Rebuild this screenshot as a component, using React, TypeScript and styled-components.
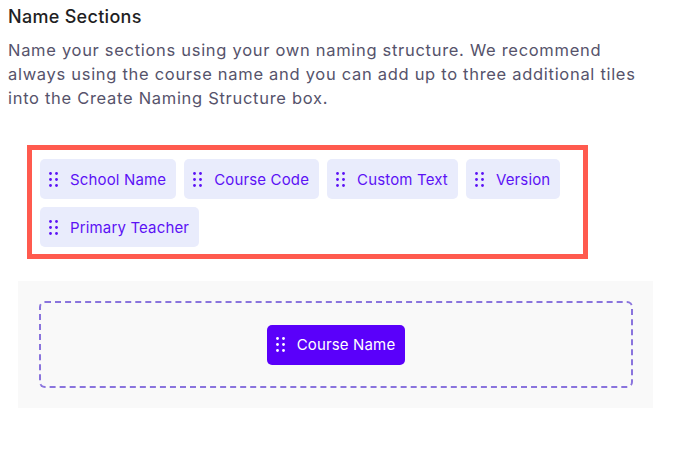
import React from 'react';
import styled, { createGlobalStyle } from 'styled-components';

const GlobalStyle = createGlobalStyle`
	body {
		margin: 0;
		background: #ffffff;
		font-family: Inter, 'Noto Sans', sans-serif;
	}
`;

const PageUI = styled.div`
	padding: 4px 8px 8px;
`;

const TitleUI = styled.h2`
	margin: 0;
	font-size: 18px;
	font-weight: 500;
	letter-spacing: 0.3px;
	line-height: 26px;
	color: #1f1f24;
`;

const DescUI = styled.p`
	margin: 8px 0 0;
	font-size: 16.5px;
	letter-spacing: 0.7px;
	line-height: 24px;
	color: #56536b;
	width: 645px;
`;

const TilesUI = styled.div`
	display: flex;
	flex-wrap: wrap;
	gap: 8px;
	width: 535px;
	margin: 35px 0 0 19px;
	padding: 9px 8px 7px;
	border: 5px solid #ff5a4e;
	box-sizing: content-box;
`;

const TileUI = styled.div<{ $active?: boolean }>`
	display: flex;
	align-items: center;
	gap: 12px;
	height: 40px;
	padding: 0 10px 0 9px;
	box-sizing: border-box;
	border-radius: 5px;
	font-size: 15px;
	letter-spacing: 0.15px;
	background: ${(p) => (p.$active ? '#5a00fa' : '#e9ecfc')};
	color: ${(p) => (p.$active ? '#ffffff' : '#5c12f5')};
`;

const DropAreaUI = styled.div`
	margin: 22px 0 0 10px;
	width: 635px;
	padding: 20px 20px 20px 21px;
	box-sizing: border-box;
	background: #f9f9f9;
`;

const DashedUI = styled.div`
	display: flex;
	justify-content: center;
	align-items: center;
	height: 87px;
	border: 2px dashed #8a74dd;
	border-radius: 6px;
	box-sizing: border-box;
`;

const Grip = () => (
	<svg width='9' height='15' viewBox='0 0 9 15' fill='currentColor'>
		<circle cx='1.5' cy='1.5' r='1.4' />
		<circle cx='7.5' cy='1.5' r='1.4' />
		<circle cx='1.5' cy='7.5' r='1.4' />
		<circle cx='7.5' cy='7.5' r='1.4' />
		<circle cx='1.5' cy='13.5' r='1.4' />
		<circle cx='7.5' cy='13.5' r='1.4' />
	</svg>
);

const tiles = ['School Name', 'Course Code', 'Custom Text', 'Version', 'Primary Teacher'];

const App = () => (
	<PageUI>
		<GlobalStyle />
		<TitleUI>Name Sections</TitleUI>
		<DescUI>
			Name your sections using your own naming structure. We recommend always using the course name and
			you can add up to three additional tiles into the Create Naming Structure box.
		</DescUI>
		<TilesUI>
			{tiles.map((t) => (
				<TileUI key={t}>
					<Grip />
					{t}
				</TileUI>
			))}
		</TilesUI>
		<DropAreaUI>
			<DashedUI>
				<TileUI $active>
					<Grip />
					Course Name
				</TileUI>
			</DashedUI>
		</DropAreaUI>
	</PageUI>
);

export default App;
